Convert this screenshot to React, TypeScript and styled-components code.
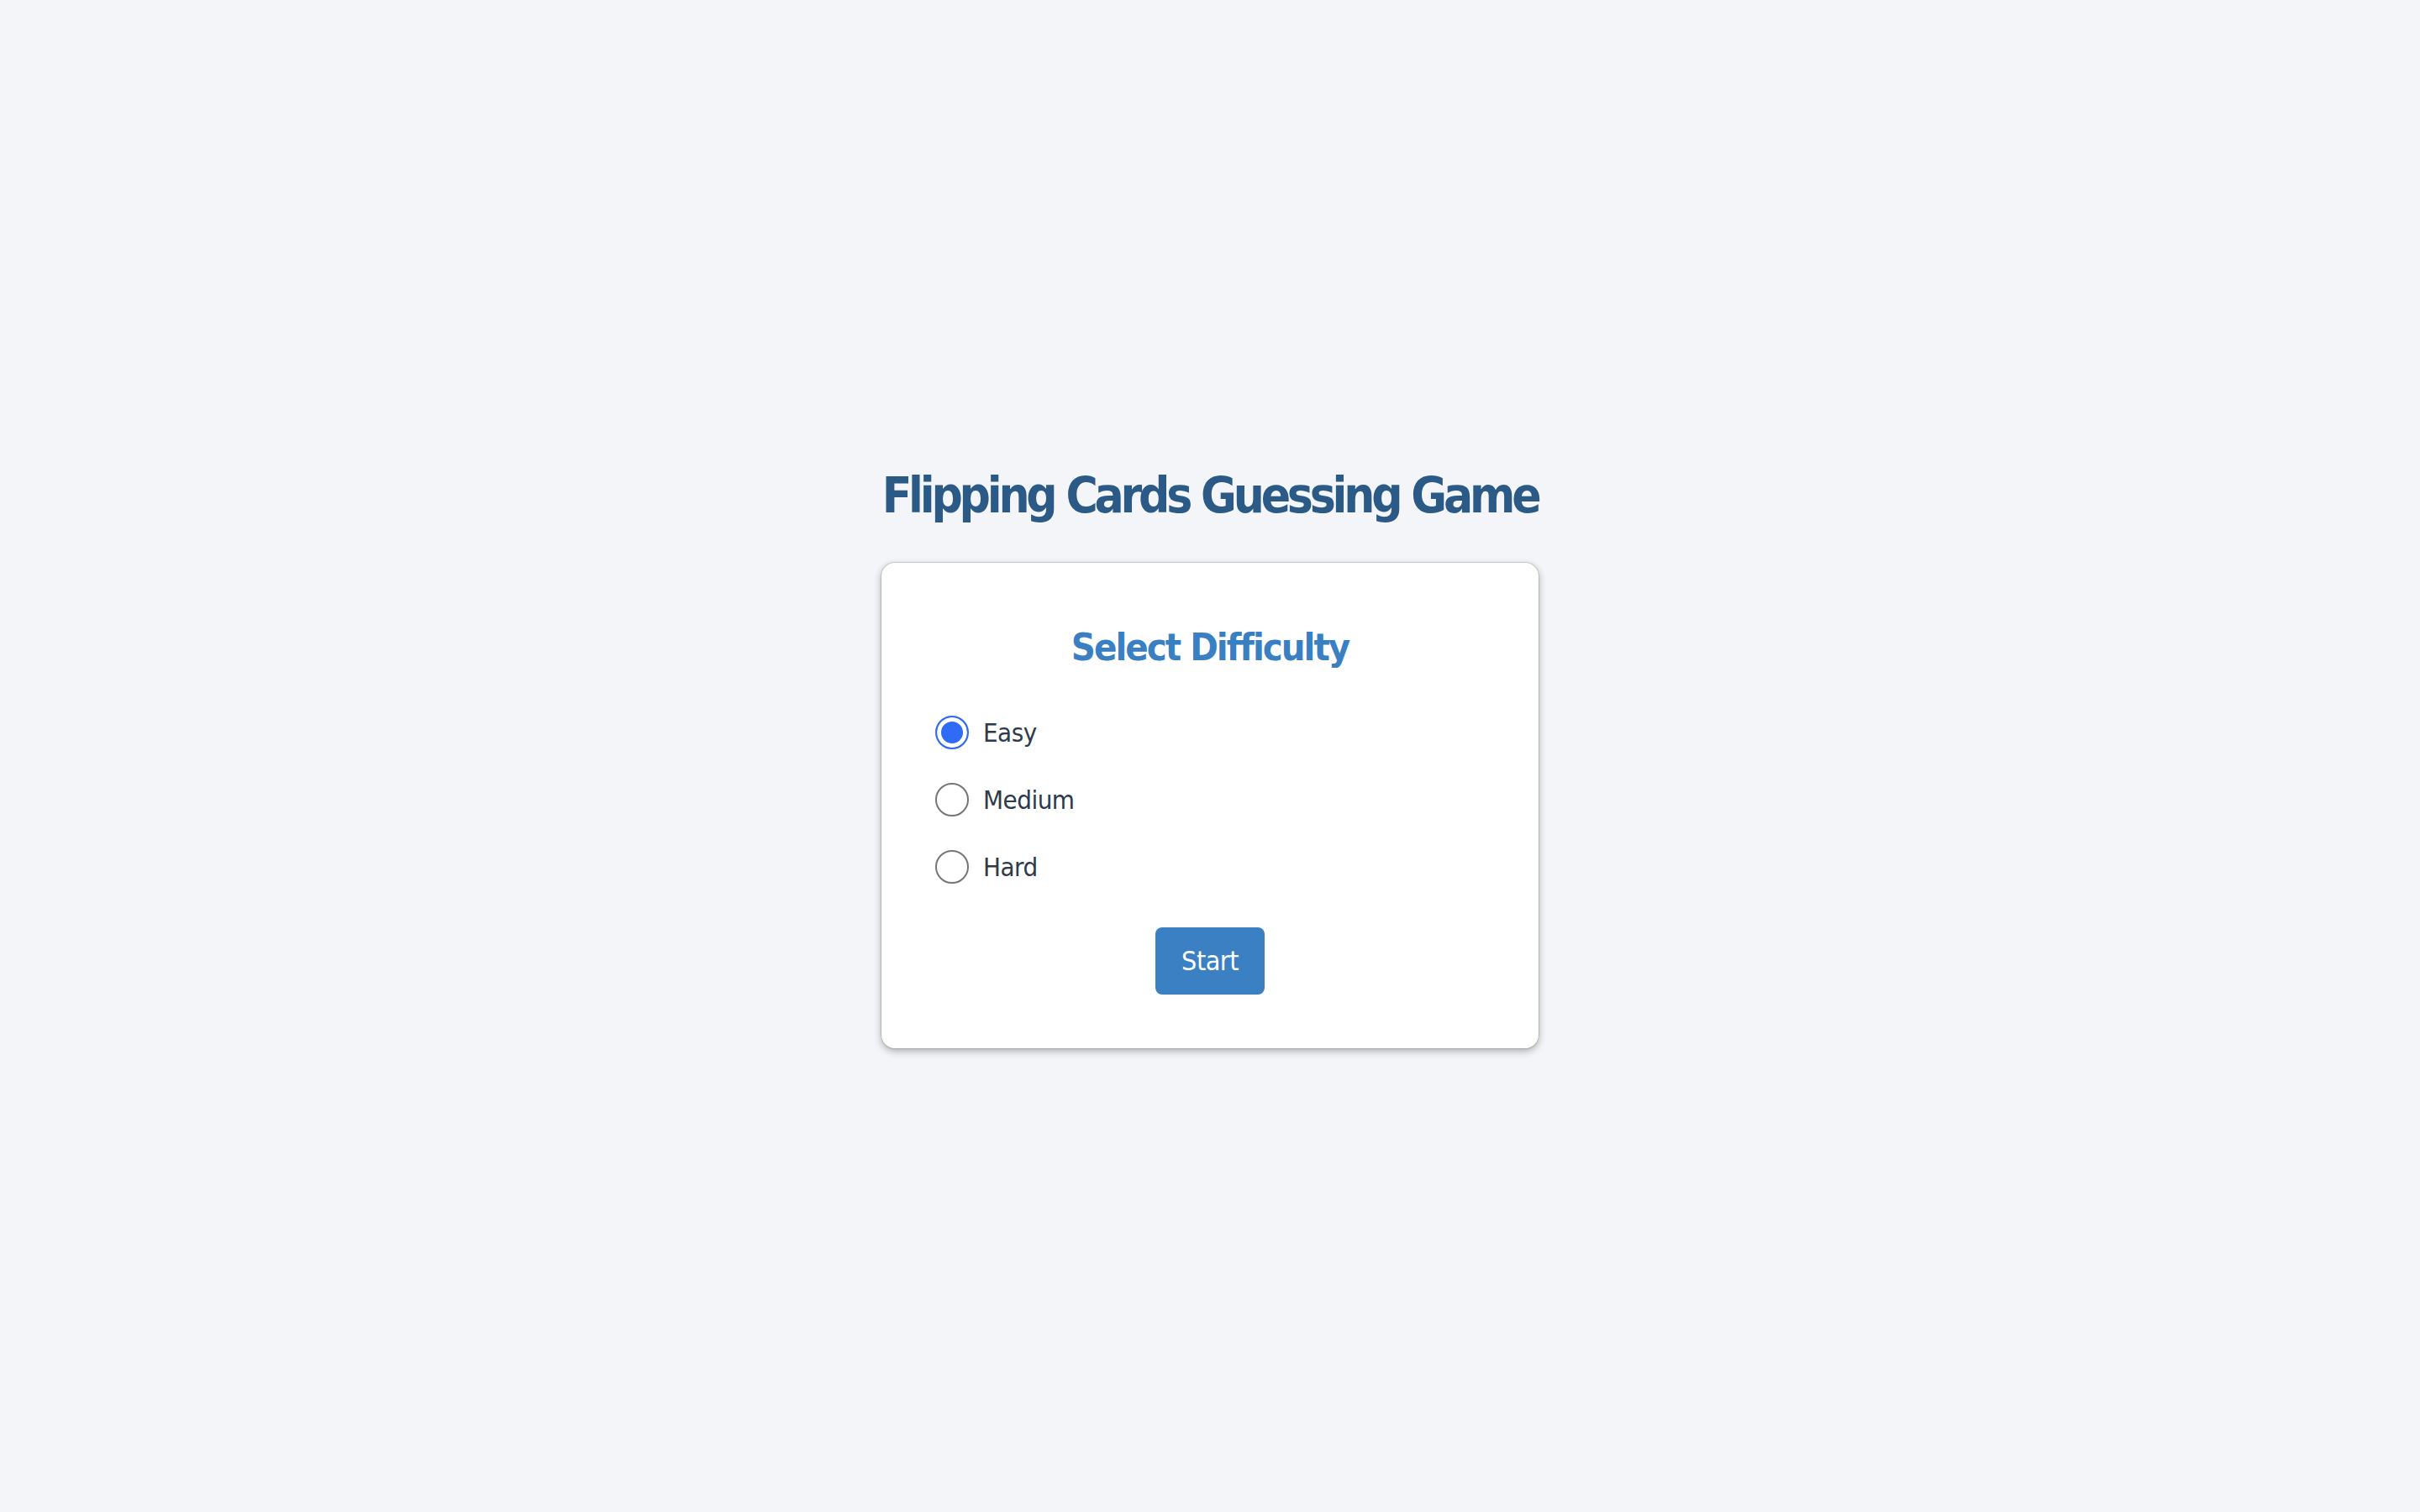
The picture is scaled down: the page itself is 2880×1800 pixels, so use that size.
import React from 'react';
import styled, { createGlobalStyle } from 'styled-components';

const GlobalStyle = createGlobalStyle`
  * {
    box-sizing: border-box;
  }
  html,
  body {
    margin: 0;
    padding: 0;
    background-color: #f3f5f8;
    font-family: 'DejaVu Sans Condensed', 'Liberation Sans', sans-serif;
  }
`;

const Page = styled.main`
  display: flex;
  flex-direction: column;
  align-items: center;
  justify-content: center;
  min-height: 100vh;
`;

const Title = styled.h1`
  margin: 0 0 41px;
  font-size: 58px;
  line-height: 77px;
  font-weight: 700;
  color: #2b5a86;
  letter-spacing: -4.2px;
`;

const Card = styled.section`
  display: flex;
  flex-direction: column;
  width: 782px;
  height: 578px;
  padding: 72px 64px 0;
  background-color: #fff;
  border-radius: 16px;
  box-shadow: 0 0 0 1px rgba(0, 0, 0, 0.12), 0 3px 10px rgba(0, 0, 0, 0.32);
`;

const Heading = styled.h2`
  margin: 0 0 52px;
  font-size: 45px;
  line-height: 58px;
  font-weight: 700;
  text-align: center;
  color: #3a7fc2;
  letter-spacing: -2px;
`;

const Options = styled.div`
  display: flex;
  flex-direction: column;
  gap: 40px;
`;

const Option = styled.label`
  display: flex;
  align-items: center;
  gap: 17px;
  height: 40px;
  font-size: 31px;
  color: #2d3a4b;
  letter-spacing: -0.5px;
  cursor: pointer;
`;

const Radio = styled.input`
  appearance: none;
  width: 40px;
  height: 40px;
  margin: 0;
  border: 2.5px solid #767676;
  border-radius: 50%;
  background-color: #fff;
  cursor: pointer;
  &:checked {
    border-color: #2f6bf5;
    background-color: #2f6bf5;
    box-shadow: 0 0 0 5px #fff inset;
  }
`;

const StartBtn = styled.button`
  align-self: center;
  width: 130px;
  height: 80px;
  margin-top: 52px;
  border: none;
  border-radius: 8px;
  background-color: #3a80c3;
  color: #fff;
  font-family: inherit;
  font-size: 32px;
  letter-spacing: -0.5px;
  cursor: pointer;
`;

const levels = ['Easy', 'Medium', 'Hard'];

function App() {
  return (
    <>
      <GlobalStyle />
      <Page>
        <Title>Flipping Cards Guessing Game</Title>
        <Card>
          <Heading>Select Difficulty</Heading>
          <Options>
            {levels.map((level) => (
              <Option key={level}>
                <Radio type="radio" name="difficulty" value={level.toLowerCase()} defaultChecked={level === 'Easy'} />
                {level}
              </Option>
            ))}
          </Options>
          <StartBtn type="button">Start</StartBtn>
        </Card>
      </Page>
    </>
  );
}

export default App;
